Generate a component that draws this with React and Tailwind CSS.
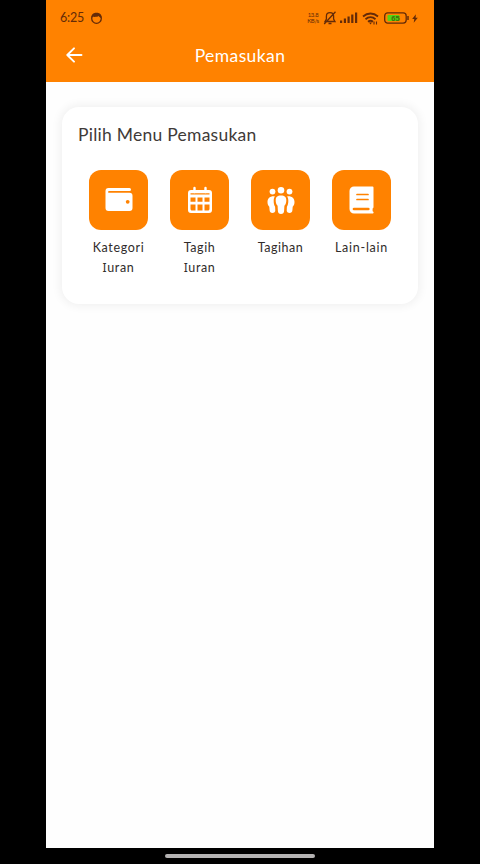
import React from "react";

function WalletIcon() {
  return (
    <svg width="28" height="24" viewBox="0 0 28 24">
      <path d="M3.500 0H24.500a1.500 1.500 0 0 1 0 3H4a.7.7 0 0 0 0 1.800H24.500A3 3 0 0 1 27.500 7.800V20a3 3 0 0 1-3 3H3.500a3 3 0 0 1-3-3V3a3 3 0 0 1 3-3Z" fill="white" />
      <circle cx="22.700" cy="13.800" r="1.900" fill="#ff8200" />
    </svg>
  );
}

function CalendarIcon() {
  return (
    <svg width="26" height="28" viewBox="0 0 26 28" fill="white">
      <path d="M7.500 2v4M18.500 2v4" stroke="white" strokeWidth="2.400" strokeLinecap="round" />
      <path fillRule="evenodd" d="M4 4h18a3 3 0 0 1 3 3v17a3 3 0 0 1-3 3H4a3 3 0 0 1-3-3V7a3 3 0 0 1 3-3Zm-.5 3.200v1.300h19V7.200ZM3.500 11.500v4.200h5v-4.200Zm7 0v4.200h5v-4.200Zm7 0v4.200h5v-4.200Zm-14 7v4.500c0 .8.700 1.500 1.500 1.500h3.500v-6Zm7 0v6h5v-6Zm7 0v6H21c.8 0 1.500-.7 1.500-1.500v-4.500Z" />
    </svg>
  );
}

function PeopleIcon() {
  return (
    <svg width="28" height="28" viewBox="0 0 28 28" fill="white">
      <circle cx="14" cy="4.300" r="3.300" />
      <circle cx="5.500" cy="5.600" r="2.900" />
      <circle cx="22.500" cy="5.600" r="2.900" />
      <path d="M14 9.500c-3.700 0-5.300 1.600-5.300 4.700 0 2.500.6 4.300 1.900 5.500l.3 5.300c.1 1.900 1.200 3 3.100 3s3-1.100 3.100-3l.3-5.300c1.300-1.200 1.900-3 1.900-5.500 0-3.100-1.600-4.700-5.300-4.700Z" />
      <path id="neighbor" d="M7.900 10.500c-3.800-.8-7.400 1.300-7.400 5.500 0 2.200.6 3.700 1.800 4.700l.3 3.500c.2 1.800 1.200 2.700 2.800 2.700 1.500 0 2.500-.6 2.900-1.900l-.2-4.300c-1-1.500-1.500-3.700-1.400-6.300 0-1.500.4-2.900 1.200-3.900Z" />
      <path d="M20.100 10.500c3.800-.8 7.400 1.300 7.400 5.500 0 2.200-.6 3.700-1.800 4.700l-.3 3.500c-.2 1.800-1.200 2.700-2.800 2.700-1.500 0-2.500-.6-2.900-1.900l.2-4.300c1-1.500 1.500-3.700 1.400-6.300 0-1.500-.4-2.900-1.200-3.900Z" />
    </svg>
  );
}

function BookIcon() {
  return (
    <svg width="25" height="28" viewBox="0 0 25 28">
      <path d="M5 .5h18.500a1 1 0 0 1 1 1V21c0 .7-.3 1.200-.9 1.500v2.700c.7.200 1 .6 1 1.200s-.5 1.100-1.100 1.100H5a4.500 4.500 0 0 1-4.500-4.500V5A4.500 4.500 0 0 1 5 .5Z" fill="white" />
      <path d="M8 8.500h11M8 13.500h11" stroke="#ff8200" strokeWidth="1.700" strokeLinecap="round" />
      <path d="M5 23h14.300" stroke="#ff8200" strokeWidth="2.700" strokeLinecap="round" />
    </svg>
  );
}

function StatusBar() {
  return (
    <div className="flex h-9 items-center pl-[14px] pr-[16px] text-[#642b08]">
      <span className="w-[24px] whitespace-nowrap text-[12.500px] leading-none tracking-[-0.200px]">6:25</span>
      <svg className="ml-[6px]" width="13" height="13" viewBox="0 0 13 13">
        <circle cx="6.500" cy="6.500" r="4.800" fill="none" stroke="currentColor" strokeWidth="1.300" />
        <path d="M1.500 6C1 3 3 .8 6.500.8S12 3 11.500 6C10 5.700 9.300 4.900 8.800 4 7.500 5 4.500 5 2.800 4.800Z" fill="currentColor" />
      </svg>
      <div className="ml-auto flex items-center">
        <div className="mr-[4px] w-[12px] text-center text-[6px] leading-[6px] tracking-[-0.300px]">
          <div>13.8</div>
          <div>KB/s</div>
        </div>
        <svg width="14" height="14" viewBox="0 0 14 14" fill="none" stroke="currentColor" strokeWidth="1.300">
          <path d="M2 10.500h10L10.600 8V5.200C10.600 3 9 1.700 7 1.700S3.400 3 3.400 5.200V8ZM5.500 12.500h3M12.500.8 1.200 13" />
        </svg>
        <svg className="ml-[3px]" width="18" height="12" viewBox="0 0 18 12" fill="currentColor">
          <rect x="0" y="8.500" width="2.200" height="2.500" />
          <rect x="3.800" y="6.500" width="2.200" height="4.500" />
          <rect x="7.500" y="4.500" width="2.200" height="6.500" />
          <rect x="11.200" y="2.500" width="2.200" height="8.500" />
          <rect x="15" y="0.500" width="2.200" height="10.500" />
        </svg>
        <svg className="ml-[4px]" width="17" height="13" viewBox="0 0 17 13" fill="none" stroke="currentColor" strokeWidth="1.800">
          <path d="M1 4.500c4.500-4 10.500-4 15 0M3.500 7.200c3-2.600 7-2.600 10 0M6 9.700c1.500-1.200 3.500-1.200 5 0" />
          <path d="m7 10.500 1.500 2 1.500-2Z" fill="currentColor" stroke="none" />
          <path d="M12 9.500v3M14.500 9.500v3" strokeWidth="1.100" />
        </svg>
        <svg className="ml-[5px]" width="25" height="12" viewBox="0 0 25 12">
          <rect x=".7" y=".9" width="21.500" height="10.200" rx="3" fill="none" stroke="currentColor" strokeWidth="1.300" />
          <rect x="3.500" y="3" width="12" height="6" rx="1" fill="#55d514" />
          <path d="M24 4v4" stroke="currentColor" strokeWidth="1.500" />
          <text x="11.500" y="8.900" textAnchor="middle" className="fill-[#426d0b] font-['Liberation_Sans'] text-[7.500px] font-bold">65</text>
        </svg>
        <svg className="ml-[3px]" width="6" height="9" viewBox="0 0 7 10">
          <path d="M4.500 0 .2 5.600h2.500L2 10l4.800-5.900H4.200Z" fill="currentColor" />
        </svg>
      </div>
    </div>
  );
}

const iuran = (
  <>
    <span className="font-['Noto_Sans',sans-serif] text-[12px] leading-none">I</span>uran
  </>
);

const items = [
  { id: "kategori", first: "Kategori", second: iuran, icon: <WalletIcon />, spacing: "tracking-[0.650px]" },
  { id: "tagih", first: "Tagih", second: iuran, icon: <CalendarIcon />, spacing: "tracking-[0.600px]" },
  { id: "tagihan", first: "Tagihan", icon: <PeopleIcon />, spacing: "tracking-[0.550px]" },
  { id: "lain", first: "Lain-lain", icon: <BookIcon />, spacing: "tracking-[0.750px]" },
];

export default function App() {
  return (
    <div className="flex h-[864px] w-[480px] flex-col items-center overflow-hidden bg-black font-['Lato',sans-serif]">
      <main className="flex h-[848px] w-[388px] flex-col bg-[#fefefe]">
        <header className="h-[82px] shrink-0 bg-[#ff8200]">
          <StatusBar />
          <div className="grid h-[38px] grid-cols-[56px_1fr_56px] items-center text-white">
            <svg className="ml-5" width="17" height="16" viewBox="0 0 17 16" fill="none" stroke="currentColor" strokeWidth="1.900" strokeLinecap="round" strokeLinejoin="round">
              <path d="M15.500 8H1.500M8 1.300 1.300 8 8 14.700" />
            </svg>
            <h1 className="pt-0.5 text-center text-[17.500px] leading-none tracking-[0.400px]">Pemasukan</h1>
          </div>
        </header>
        <section className="mx-4 mt-[25px] h-[197px] rounded-[17px] bg-white px-4 pt-[16px] shadow-[0_0_10px_2px_rgba(0,0,0,0.06)]">
          <h2 className="text-[17.500px] leading-6 tracking-[0.250px] text-[#403a38]">Pilih Menu Pemasukan</h2>
          <div className="mt-[23px] flex justify-center gap-[22px]">
            {items.map((item) => (
              <div key={item.id} className="flex w-[59px] flex-col items-center">
                <div className="flex h-[60px] w-[59px] items-center justify-center rounded-[12px] bg-[#ff8200]">{item.icon}</div>
                <div className={"mt-2 text-center text-[12.500px] leading-5 whitespace-nowrap text-[#302c2b] " + item.spacing}>
                  <div>{item.first}</div>
                  {item.second && <div>{item.second}</div>}
                </div>
              </div>
            ))}
          </div>
        </section>
      </main>
      <div className="mt-[6px] h-1 w-[150px] rounded-full bg-[#b5b3b3]" />
    </div>
  );
}
